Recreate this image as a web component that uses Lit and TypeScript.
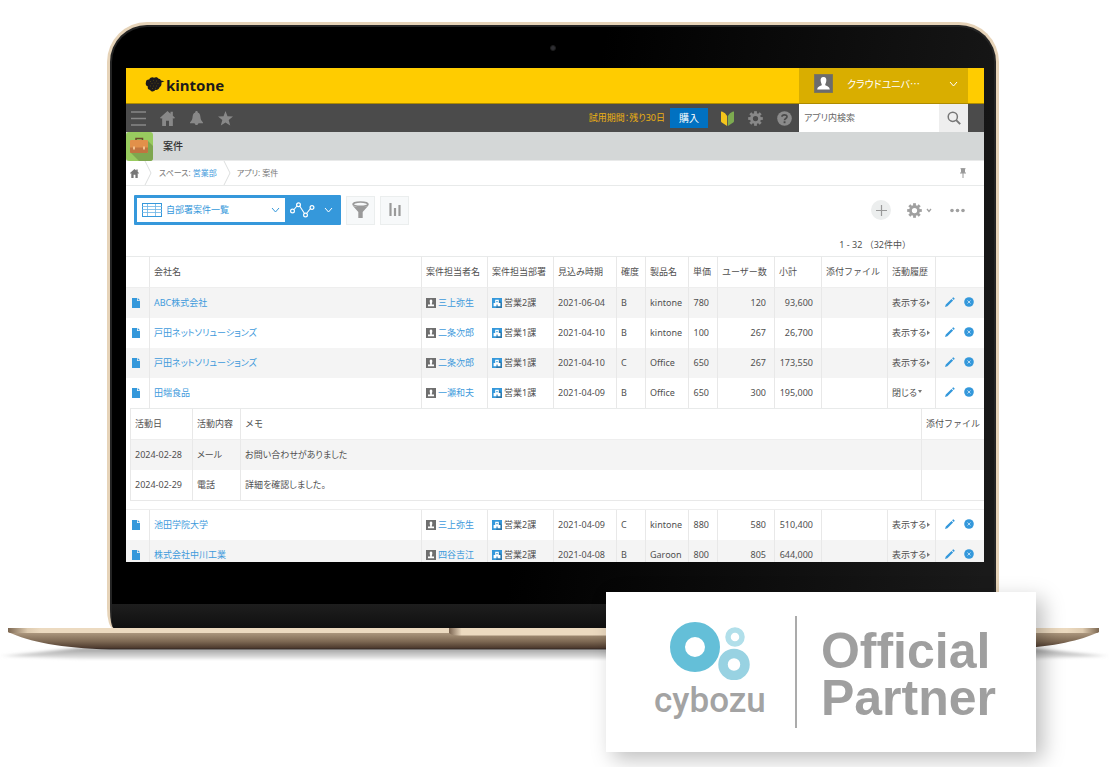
import { LitElement, html, css, svg, nothing } from "lit";
import { customElement, state } from "lit/decorators.js";
import { classMap } from "lit/directives/class-map.js";

interface Activity {
  date: string;
  kind: string;
  memo: string;
}

interface Deal {
  company: string;
  owner: string;
  dept: string;
  due: string;
  rank: string;
  product: string;
  price: string;
  users: string;
  subtotal: string;
  activities?: Activity[];
}

const DEALS: Deal[] = [
  { company: "ABC株式会社", owner: "三上弥生", dept: "営業2課", due: "2021-06-04", rank: "B", product: "kintone", price: "780", users: "120", subtotal: "93,600" },
  { company: "戸田ネットソリューションズ", owner: "二条次郎", dept: "営業1課", due: "2021-04-10", rank: "B", product: "kintone", price: "100", users: "267", subtotal: "26,700" },
  { company: "戸田ネットソリューションズ", owner: "二条次郎", dept: "営業1課", due: "2021-04-10", rank: "C", product: "Office", price: "650", users: "267", subtotal: "173,550" },
  {
    company: "田端食品", owner: "一瀬和夫", dept: "営業1課", due: "2021-04-09", rank: "B", product: "Office", price: "650", users: "300", subtotal: "195,000",
    activities: [
      { date: "2024-02-28", kind: "メール", memo: "お問い合わせがありました" },
      { date: "2024-02-29", kind: "電話", memo: "詳細を確認しました。" },
    ],
  },
  { company: "池田学院大学", owner: "三上弥生", dept: "営業2課", due: "2021-04-09", rank: "C", product: "kintone", price: "880", users: "580", subtotal: "510,400" },
  { company: "株式会社中川工業", owner: "四谷吉江", dept: "営業2課", due: "2021-04-08", rank: "B", product: "Garoon", price: "800", users: "805", subtotal: "644,000" },
];

const icon = (w: number, h: number, body: unknown) =>
  html`<svg width=${w} height=${h} viewBox="0 0 ${w} ${h}" aria-hidden="true">${body}</svg>`;

const chevron = (w: number, h: number) =>
  icon(w, h, svg`<path d="M1 1L${w / 2} ${h - 1}L${w - 1} 1" fill="none" stroke="currentColor" stroke-width="1"/>`);

const house = (s: number) => html`<svg width=${s} height=${s} viewBox="0 0 14 14" aria-hidden="true">
  <path d="M7 0L0 6.2L1 7.2L2 6.5V14H5.6V9H8.4V14H12V6.5L13 7.2L14 6.2L12 4.4V.6H9.8V2.5Z" fill="currentColor"/></svg>`;

const GEAR_TEETH = [0, 45, 90, 135, 180, 225, 270, 315];
const gear = (s: number) => html`<svg width=${s} height=${s} viewBox="0 0 16 16" aria-hidden="true">
  <circle cx="8" cy="8" r="4.3" fill="none" stroke="currentColor" stroke-width="3"/>
  ${GEAR_TEETH.map((a) => svg`<rect x="6.5" y="0.2" width="3" height="3" fill="currentColor" transform="rotate(${a} 8 8)"/>`)}
</svg>`;

const personIcon = icon(10, 10, svg`<rect width="10" height="10" fill="#6f6f6f"/>
  <path d="M5 1.5C6.2 1.5 6.4 2.5 6.300 3.600C6.200 4.600 5.900 5 5.800 6.400H8V8.200H2V6.400H4.200C4.100 5 3.800 4.600 3.700 3.600C3.600 2.500 3.800 1.500 5 1.500Z" fill="#fff"/>`);

const orgIcon = icon(10, 10, svg`<rect width="10" height="10" fill="#3498db"/><path d="M7 2L10 5V10H4Z" fill="#2b78ad"/>
  <path d="M3.200 1.800H6.800V5H8.400V8.300H5.600V6.500H4.400V8.300H1.600V5H3.200Z" fill="#fff"/><path d="M4.300 3H5.700V4.200H4.300Z" fill="#3498db"/>`);

const fileIcon = icon(8, 10, svg`<path d="M0 0H5V3H8V10H0Z" fill="#3498db"/><path d="M5.700 0L8 2.300H5.700Z" fill="#3498db"/>`);

const pencilIcon = icon(10, 10, svg`<path d="M0 10L.8 7.600L6.500 1.900L8.100 3.500L2.400 9.200ZM7.100 1.300L8.300 .2L9.800 1.700L8.700 2.900Z" fill="#3498db"/>`);

const deleteIcon = icon(10, 10, svg`<circle cx="5" cy="5" r="4.800" fill="#3498db"/>
  <path d="M3.500 3.500L6.500 6.500M6.500 3.500L3.500 6.500" stroke="#c4e2f6" stroke-width=".9"/>`);

@customElement("deal-screen")
export class DealScreen extends LitElement {
  @state() private open = new Set<number>([3]);

  static styles = css`
    :host {
      display: block;
      background: #fff;
      color: #505050;
      font: 9px/14px "Noto Sans", "Noto Sans CJK JP", sans-serif;
      font-feature-settings: "palt";
      overflow: hidden;
    }
    * { box-sizing: border-box; }
    svg { display: block; flex: none; }
    a { color: #3f9bdc; text-decoration: none; }
    button, input, select {
      font: inherit;
      font-feature-settings: inherit;
      color: inherit;
      border: 0;
      padding: 0;
      margin: 0;
      background: none;
      border-radius: 0;
    }
    button { display: flex; align-items: center; justify-content: center; cursor: pointer; }
    .brandbar {
      display: flex;
      justify-content: space-between;
      height: 36px;
      padding: 0 16px 0 19px;
      background: #ffcc00;
      border-bottom: 1px solid #ae8b00;
    }
    .brand {
      display: flex;
      align-items: center;
      gap: 1px;
      padding-bottom: 2px;
      color: #1d1a1b;
      font: bold 15px/20px "Noto Sans", sans-serif;
    }
    .user {
      width: 169px;
      padding: 0 10px 4px 15px;
      gap: 14px;
      justify-content: flex-start;
      background: #d9ae00;
      color: #fff;
      font-family: "Noto Sans CJK JP", sans-serif;
      font-size: 10px;
    }
    .user span { flex: 1; text-align: left; }
    .nav {
      display: flex;
      align-items: center;
      height: 28px;
      padding: 0 16px 0 5px;
      background: #4b4b4b;
      color: #888;
    }
    .nav .left { display: flex; align-items: center; gap: 14px; flex: 1; }
    .nav .right { display: flex; align-items: center; height: 100%; }
    .trial { color: #eeb111; margin-right: 5px; }
    .buy { width: 38px; height: 20px; background: #0171c1; color: #fff; font-size: 10px; margin-right: 13px; }
    .tools { display: flex; align-items: center; gap: 14px; margin-right: 7px; }
    .search { display: flex; height: 28px; background: #fff; }
    .search input { width: 140px; padding: 0 5px; outline: none; color: #555; }
    .search input::placeholder { color: #666; opacity: 1; }
    .search button { width: 29px; background: #eeeeee; color: #777; }
    .titlebar {
      display: flex;
      align-items: center;
      gap: 10px;
      height: 29px;
      background: #d4d7d7;
      border-bottom: 1px solid #e9eaea;
    }
    h1 { margin: 0; font-size: 10px; line-height: 14px; font-weight: 500; color: #333; }
    .crumbs {
      display: flex;
      align-items: center;
      height: 25px;
      padding: 0 18px 0 4px;
      border-bottom: 1px solid #e8eaea;
      color: #777;
      font-size: 8px;
    }
    .crumbs .home { color: #777; }
    .crumbs .sep { margin: 0 5px 0 3px; }
    .crumbs .pin { margin-left: auto; }
    .toolbar { display: flex; align-items: center; gap: 5px; padding: 9px 19px 0 8px; }
    .view { display: flex; height: 30px; padding: 3px; background: #3598db; border-radius: 1px; }
    .picker { display: flex; align-items: center; width: 148px; padding: 0 5px 0 5px; background: #fff; color: #3598db; gap: 4px; }
    .picker select { flex: 1; width: 20px; height: 24px; appearance: none; color: #3598db; outline: none; }
    .graph { width: 53px; gap: 9px; color: #fff; }
    .square { width: 29px; height: 29px; background: #f7f9fa; border: 1px solid #ebeeee; color: #9a9a9a; }
    .toolbar .square + .end { margin-left: auto; }
    .end { display: flex; align-items: center; gap: 16px; color: #a0a0a0; }
    .add { width: 20px; height: 20px; border-radius: 50%; background: #eceeee; color: #999; }
    .settings { gap: 4px; margin-right: 2px; }
    .count { padding: 12px 73px 4px 0; line-height: 15px; text-align: right; font-feature-settings: normal; }
    table { border-collapse: separate; border-spacing: 0; table-layout: fixed; width: 100%; }
    th, td { height: 30px; padding: 0 0 0 4px; border-left: 1px solid #e8e8e8; text-align: left; font-weight: normal; white-space: nowrap; overflow: hidden; vertical-align: middle; }
    th { height: 32px; border-top: 1px solid #e8eaea; border-bottom: 1px solid #eeeeee; font-feature-settings: normal; }
    th:first-child, td:first-child { border-left: 0; padding-left: 6px; }
    .c-file { width: 23px; }
    .c-person { width: 66px; }
    .c-due { width: 63px; }
    .c-short { width: 29px; }
    .c-product { width: 43px; }
    .c-users { width: 57px; }
    .c-sum { width: 47px; }
    .c-history { width: 48px; }
    .c-actions { width: 49px; }
    .shade td { background: #f4f4f4; }
    td.num { text-align: right; padding: 0 8px 0 0; }
    .withicon { display: flex; align-items: center; gap: 2px; }
    .toggle { gap: 1px; }
    .actions { display: flex; align-items: center; justify-content: space-between; padding: 0 10px 3px 5px; }
    td.nest { height: auto; padding: 0 0 8px 4px; border-bottom: 1px solid #eee; }
    .nest td.nest:first-child, tr td.nest:first-child { padding-left: 4px; }
    .nest table { border-left: 1px solid #e8e8e8; border-bottom: 1px solid #e8e8e8; }
    .nest th:nth-child(1) { width: 61px; }
    .nest th:nth-child(2) { width: 48px; }
    .nest th:nth-child(4) { width: 63px; }
    .nest th:first-child, .nest td:first-child { padding-left: 4px; }
  `;

  private toggle(i: number) {
    const next = new Set(this.open);
    if (next.has(i)) next.delete(i);
    else next.add(i);
    this.open = next;
  }

  private renderRow(d: Deal, i: number) {
    const opened = this.open.has(i);
    return html`
      <tr class=${classMap({ shade: i === 0 || i === 2 || i === 5 })}>
        <td><a href="#" aria-label="レコードを表示">${fileIcon}</a></td>
        <td><a href="#">${d.company}</a></td>
        <td><div class="withicon">${personIcon}<a href="#">${d.owner}</a></div></td>
        <td><div class="withicon">${orgIcon}<span>${d.dept}</span></div></td>
        <td>${d.due}</td>
        <td>${d.rank}</td>
        <td>${d.product}</td>
        <td class="num">${d.price}</td>
        <td class="num">${d.users}</td>
        <td class="num">${d.subtotal}</td>
        <td></td>
        <td>
          <button class="toggle" aria-expanded=${opened} @click=${() => this.toggle(i)}>
            ${opened ? "閉じる" : "表示する"}
            ${opened
              ? icon(4, 8, svg`<path d="M0 1H4L2 4Z" fill="#777"/>`)
              : icon(3, 8, svg`<path d="M0 1.500V6L3 3.700Z" fill="#777"/>`)}
          </button>
        </td>
        <td>
          <div class="actions">
            <button aria-label="編集">${pencilIcon}</button>
            <button aria-label="削除">${deleteIcon}</button>
          </div>
        </td>
      </tr>
      ${opened && d.activities
        ? html`<tr>
            <td class="nest" colspan="13">
              <table>
                <thead><tr><th>活動日</th><th>活動内容</th><th>メモ</th><th>添付ファイル</th></tr></thead>
                <tbody>
                  ${d.activities.map(
                    (a, n) => html`<tr class=${classMap({ shade: n % 2 === 0 })}>
                      <td>${a.date}</td><td>${a.kind}</td><td>${a.memo}</td><td></td>
                    </tr>`
                  )}
                </tbody>
              </table>
            </td>
          </tr>`
        : nothing}
    `;
  }

  render() {
    return html`
      <header class="brandbar">
        <div class="brand">
          ${icon(20, 17, svg`<path d="M1 6C1 4 3 3.400 4.200 3.600C5 1.400 7.600.6 9 1.800C10.600.8 13 1.200 13.600 2.800C15 2.600 15.600 3.800 16 4.400L19.500 5.200L16.400 6.600C16.800 9 16 10.600 14.600 11.200C13.800 13.600 11.600 14.400 10.400 13.800C9 16 6 16 5.200 14C3 14 2.200 12 3 10.600C1 10 .2 8 1 6Z" fill="#1d1a1b"/>
            <path d="M5 5.500h1M8 4.300h1M11 5h1M6.500 7.500h1M9.500 7h1M12.500 7.500h1M5 10h1M8 10h1M11 10h1M7 12.500h1M10 12.300h1" stroke="#665410" stroke-width=".7"/>`)}
          <span>kintone</span>
        </div>
        <button class="user">
          ${icon(19, 19, svg`<rect width="19" height="19" fill="#6c6c6c" stroke="#8d8147"/>
            <path d="M9.500 3C12 3 12.600 5 12.300 7C12.100 8.800 11.300 9.600 11.200 11C12.400 12.200 15.500 12.200 15.800 15.500H3.200C3.500 12.200 6.600 12.200 7.800 11C7.700 9.600 6.900 8.800 6.700 7C6.400 5 7 3 9.500 3Z" fill="#fff"/>`)}
          <span>クラウドユニバ…</span>
          ${chevron(9, 6)}
        </button>
      </header>

      <nav class="nav">
        <div class="left">
          <button aria-label="メニュー">${icon(15, 15, svg`<path d="M0 1H15M0 7.500H15M0 14H15" stroke="currentColor" stroke-width="1.600"/>`)}</button>
          <button aria-label="ポータル">${house(15)}</button>
          <button aria-label="通知">${icon(15, 15, svg`<path d="M7.500 0C8.500 0 8.800.7 8.800 1.400C11 2.300 11.300 4 11.500 6.500C11.700 9 12.600 9.800 14 11.500V12.200H1V11.500C2.400 9.800 3.300 9 3.500 6.500C3.700 4 4 2.300 6.200 1.400C6.200.7 6.500 0 7.500 0ZM5.500 12H9.500C9.200 13.600 8.500 14 7.500 14C6.500 14 5.800 13.600 5.500 12Z" fill="currentColor"/>`)}</button>
          <button aria-label="お気に入り">${icon(15, 15, svg`<path d="M7.500 0L9.500 5.200L15 5.500L10.700 9L12.200 14.500L7.500 11.400L2.800 14.500L4.300 9L0 5.500L5.500 5.200Z" fill="currentColor"/>`)}</button>
        </div>
        <div class="right">
          <span class="trial">試用期間：残り30日</span>
          <button class="buy">購入</button>
          <div class="tools">
            <button aria-label="はじめてガイド">${icon(13, 15, svg`<path d="M0 1Q0 0 1 .6Q4.500 2 6.100 5V15L.8 11.500Q0 11 0 10Z" fill="#f5c51c"/><path d="M13 1Q13 0 12 .6Q8.500 2 6.900 5V15L12.200 11.500Q13 11 13 10Z" fill="#7dab50"/>`)}</button>
            <button aria-label="設定">${gear(15)}</button>
            <button aria-label="ヘルプ">${icon(15, 15, svg`<circle cx="7.500" cy="7.500" r="7.300" fill="#8b8b8b"/>
              <path d="M5 5.800C5 3.200 10 3.200 10 5.700C10 7.500 7.500 7.400 7.500 9.200" fill="none" stroke="#4b4b4b" stroke-width="1.700"/><rect x="6.600" y="10.300" width="1.900" height="1.900" fill="#4b4b4b"/>`)}</button>
          </div>
          <form class="search" @submit=${(e: Event) => e.preventDefault()}>
            <input type="text" aria-label="アプリ内検索" placeholder="アプリ内検索" />
            <button aria-label="検索">${icon(14, 14, svg`<circle cx="5.800" cy="5.800" r="4.600" fill="none" stroke="currentColor" stroke-width="1.500"/><path d="M9.200 9.200L13.200 13.200" stroke="currentColor" stroke-width="1.900"/>`)}</button>
          </form>
        </div>
      </nav>

      <div class="titlebar">
        ${icon(27, 29, svg`<rect width="27" height="29" rx="3" fill="#98cb5f"/>
          <path d="M22 9L27 14V26Q27 29 24 29H13L5 21Z" fill="#7ea64f"/>
          <path d="M10 9V6.500H16.500V9" fill="none" stroke="#6b4a2b" stroke-width="1.500"/>
          <rect x="4" y="8" width="18" height="13" rx="1" fill="#e2904a"/>
          <path d="M4 15.500H22V20Q22 21 21 21H5Q4 21 4 20Z" fill="#c07440"/>
          <rect x="7" y="14.500" width="2" height="3" fill="#f2c08b"/><rect x="17" y="14.500" width="2" height="3" fill="#f2c08b"/>`)}
        <h1>案件</h1>
      </div>

      <div class="crumbs">
        <a class="home" href="#" aria-label="ホーム">${house(9)}</a>
        <span class="sep">${icon(12, 24, svg`<path d="M3 0L9 12L3 24" fill="none" stroke="#dcdede"/>`)}</span>
        <span>スペース: <a href="#">営業部</a></span>
        <span class="sep">${icon(12, 24, svg`<path d="M4 0L10 12L4 24" fill="none" stroke="#dcdede"/>`)}</span>
        <span>アプリ: 案件</span>
        <button class="pin" aria-label="固定">${icon(6, 10, svg`<path d="M.5 .7H5.500M1.500 1H4.500V4.500H1.500ZM0 5H6M3 5V10" fill="#999" stroke="#999"/>`)}</button>
      </div>

      <div class="toolbar">
        <div class="view">
          <label class="picker">
            ${icon(20, 14, svg`<rect x=".5" y=".5" width="19" height="13" fill="#fff" stroke="#3598db"/>
              <path d="M0 3.500H20M0 6.500H20M0 9.500H20M5.500 1V13M13.500 1V13" stroke="#6bb4e6" stroke-width=".8"/>`)}
            <select aria-label="一覧">
              <option>自部署案件一覧</option>
            </select>
            ${chevron(9, 6)}
          </label>
          <button class="graph" aria-label="グラフ">
            ${icon(25, 16, svg`<path d="M4 7.500L7 4M9.500 3.800L14.500 11.500M16.500 11.500L20.500 6.500" stroke="#fff" stroke-width="1.100"/>
              <g fill="none" stroke="#fff" stroke-width="1.200"><circle cx="2.500" cy="9" r="1.900"/><circle cx="8.500" cy="2.800" r="1.900"/><circle cx="15.500" cy="13" r="1.900"/><circle cx="22" cy="5.500" r="1.900"/></g>`)}
            ${chevron(9, 6)}
          </button>
        </div>
        <button class="square" aria-label="絞り込む">${icon(17, 18, svg`<ellipse cx="8.500" cy="3.200" rx="7.500" ry="2.200" fill="none" stroke="currentColor" stroke-width="1.600"/><path d="M.5 4.500C3 6.500 14 6.500 16.500 4.500L10.700 11V17H6.300V11Z" fill="currentColor"/>`)}</button>
        <button class="square" aria-label="集計する">${icon(12, 14, svg`<path d="M1.500 0V13M6 5V13M10.500 2V13" stroke="currentColor" stroke-width="2.200"/>`)}</button>
        <div class="end">
          <button class="add" aria-label="追加">${icon(11, 11, svg`<path d="M5.500 0V11M0 5.500H11" stroke="currentColor" stroke-width="1.200"/>`)}</button>
          <button class="settings" aria-label="アプリの設定">${gear(15)}${icon(6, 5, svg`<path d="M1 1L3 3.500L5 1" fill="none" stroke="currentColor" stroke-width="1.300"/>`)}</button>
          <button aria-label="オプション">${icon(15, 5, svg`<g fill="currentColor"><circle cx="2" cy="2.500" r="1.800"/><circle cx="7.500" cy="2.500" r="1.800"/><circle cx="13" cy="2.500" r="1.800"/></g>`)}</button>
        </div>
      </div>
      <div class="count">1 - 32 （32件中）</div>

      <table>
        <thead>
          <tr>
            <th class="c-file"></th>
            <th>会社名</th>
            <th class="c-person">案件担当者名</th>
            <th class="c-person">案件担当部署</th>
            <th class="c-due">見込み時期</th>
            <th class="c-short">確度</th>
            <th class="c-product">製品名</th>
            <th class="c-short">単価</th>
            <th class="c-users">ユーザー数</th>
            <th class="c-sum">小計</th>
            <th class="c-person">添付ファイル</th>
            <th class="c-history">活動履歴</th>
            <th class="c-actions"></th>
          </tr>
        </thead>
        <tbody>${DEALS.map((d, i) => this.renderRow(d, i))}</tbody>
      </table>
    `;
  }
}

@customElement("partner-badge")
export class PartnerBadge extends LitElement {
  static styles = css`
    :host {
      display: flex;
      align-items: center;
      box-sizing: border-box;
      padding: 24px 40px 24px 48px;
      background: #fff;
      box-shadow: 7px 7px 20px rgba(0, 0, 0, 0.26);
    }
    .mark { display: flex; flex-direction: column; align-items: center; width: 112px; }
    .mark svg { display: block; }
    .word { font: 500 35px/42px Roboto, sans-serif; color: #a3a3a3; }
    .official {
      margin-left: 29px;
      padding: 12px 0 6px 24px;
      border-left: 2px solid #ababab;
      color: #9f9f9f;
      font: bold 50px/47px "Liberation Sans", sans-serif;
      font-variant-ligatures: none;
    }
    .official span { display: block; }
  `;

  render() {
    return html`
      <div class="mark">
        <svg width="80" height="58" viewBox="0 0 80 58" aria-hidden="true">
          <circle cx="25" cy="25" r="17.500" fill="none" stroke="#64bfd8" stroke-width="15" />
          <circle cx="65" cy="15" r="7" fill="none" stroke="#b1dfea" stroke-width="5.500" />
          <circle cx="64" cy="42.500" r="11" fill="none" stroke="#98d2e2" stroke-width="9.500" />
        </svg>
        <span class="word">cybozu</span>
      </div>
      <div class="official"><span>Official</span><span>Partner</span></div>
    `;
  }
}

@customElement("app-root")
export class AppRoot extends LitElement {
  static styles = css`
    :host {
      display: block;
      position: relative;
      min-height: 100vh;
      padding-top: 22px;
      box-sizing: border-box;
      background: #fff;
      overflow: hidden;
    }
    .lid {
      margin: 0 110px 0 107px;
      border: 3px solid #e6d3b8;
      border-bottom: 0;
      border-radius: 40px 40px 6px 6px / 40px 40px 20px 20px;
      background: #e6d3b8;
    }
    .glass {
      box-sizing: border-box;
      border: 2px solid #242424;
      border-bottom: 0;
      border-radius: 37px 37px 4px 4px / 37px 37px 18px 18px;
      background: linear-gradient(100deg, #000 50%, #1a1a1a 98%);
      overflow: hidden;
    }
    .camera { display: flex; justify-content: center; align-items: center; height: 41px; }
    .camera i { width: 4px; height: 4px; border: 1px solid #1d1d1d; border-radius: 50%; background: #2e2e33; }
    deal-screen { aspect-ratio: 858 / 494; margin: 0 10px 0 14px; }
    .chin { height: 24px; margin-top: 42px; background: linear-gradient(#1e1e1e, #101010); }
    .base { display: block; width: 100%; height: 36px; }
    partner-badge { position: absolute; right: 73px; bottom: 15px; width: 430px; height: 160px; }
  `;

  render() {
    return html`
      <div class="lid">
        <div class="glass">
          <div class="camera"><i></i></div>
          <deal-screen></deal-screen>
          <div class="chin"></div>
        </div>
      </div>
      <svg class="base" viewBox="0 0 1109 36" preserveAspectRatio="none" aria-hidden="true">
        <defs>
          <linearGradient id="body" x1="0" y1="5" x2="0" y2="22" gradientUnits="userSpaceOnUse">
            <stop offset="0" stop-color="#ab967d" /><stop offset=".5" stop-color="#7d6853" />
            <stop offset=".88" stop-color="#4d3a2e" /><stop offset=".95" stop-color="#2e2523" /><stop offset="1" stop-color="#444" />
          </linearGradient>
          <linearGradient id="strip" x1="0" x2="1">
            <stop offset="0" stop-color="#7c6751" /><stop offset=".018" stop-color="#decbb0" />
            <stop offset=".03" stop-color="#ecdac0" /><stop offset=".97" stop-color="#ecdac0" />
            <stop offset=".985" stop-color="#decbb0" /><stop offset="1" stop-color="#7c6751" />
          </linearGradient>
          <linearGradient id="notch" x1="0" x2="1">
            <stop offset="0" stop-color="#7a6450" /><stop offset=".06" stop-color="#ecdac0" />
            <stop offset=".94" stop-color="#ecdac0" /><stop offset="1" stop-color="#7a6450" />
          </linearGradient>
          <linearGradient id="floor" x1="0" y1="20" x2="0" y2="34" gradientUnits="userSpaceOnUse">
            <stop offset="0" stop-color="#999" /><stop offset=".4" stop-color="#c4c4c4" /><stop offset="1" stop-color="#fff" />
          </linearGradient>
          <filter id="soft" x="-5%" y="-60%" width="110%" height="220%"><feGaussianBlur stdDeviation="4 1.8" /></filter>
        </defs>
        <path d="M2 28L80 20H1029L1107 28L1029 31H80Z" fill="url(#floor)" filter="url(#soft)" />
        <path d="M8 4C30 14 60 20 110 21.500H997C1047 20 1077 14 1099 4Z" fill="url(#body)" />
        <path d="M8 0H1099V4L1097 5H10L8 4Z" fill="url(#strip)" />
        <path d="M449 0H660V5Q658 7.500 654 7.500H459Q451 7.500 449 5Z" fill="url(#notch)" />
      </svg>
      <partner-badge></partner-badge>
    `;
  }
}
